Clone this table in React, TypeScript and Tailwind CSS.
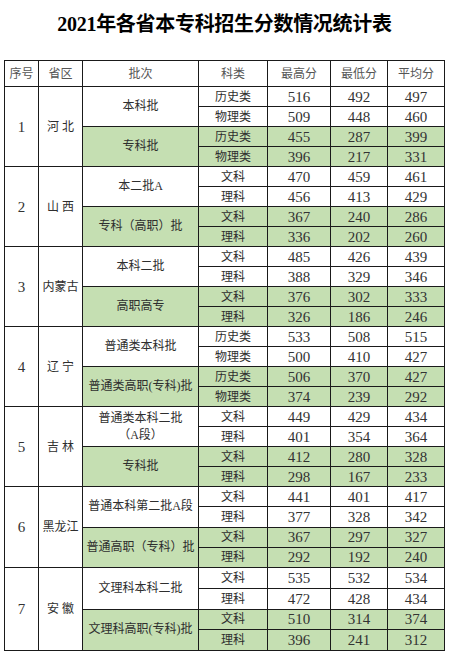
import React from 'react';

type Row = { kind: string; hi: number; lo: number; avg: number };
type Batch = { name: React.ReactNode; rows: Row[] };
type Province = { id: number; name: string; batches: Batch[] };

// 每省两个批次，第二个批次用绿色底
const data: Province[] = [
    {
        id: 1, name: '河 北',
        batches: [
            { name: '本科批', rows: [{ kind: '历史类', hi: 516, lo: 492, avg: 497 }, { kind: '物理类', hi: 509, lo: 448, avg: 460 }] },
            { name: '专科批', rows: [{ kind: '历史类', hi: 455, lo: 287, avg: 399 }, { kind: '物理类', hi: 396, lo: 217, avg: 331 }] },
        ],
    },
    {
        id: 2, name: '山 西',
        batches: [
            { name: '本二批A', rows: [{ kind: '文科', hi: 470, lo: 459, avg: 461 }, { kind: '理科', hi: 456, lo: 413, avg: 429 }] },
            { name: '专科（高职）批', rows: [{ kind: '文科', hi: 367, lo: 240, avg: 286 }, { kind: '理科', hi: 336, lo: 202, avg: 260 }] },
        ],
    },
    {
        id: 3, name: '内蒙古',
        batches: [
            { name: '本科二批', rows: [{ kind: '文科', hi: 485, lo: 426, avg: 439 }, { kind: '理科', hi: 388, lo: 329, avg: 346 }] },
            { name: '高职高专', rows: [{ kind: '文科', hi: 376, lo: 302, avg: 333 }, { kind: '理科', hi: 326, lo: 186, avg: 246 }] },
        ],
    },
    {
        id: 4, name: '辽 宁',
        batches: [
            { name: '普通类本科批', rows: [{ kind: '历史类', hi: 533, lo: 508, avg: 515 }, { kind: '物理类', hi: 500, lo: 410, avg: 427 }] },
            { name: '普通类高职(专科)批', rows: [{ kind: '历史类', hi: 506, lo: 370, avg: 427 }, { kind: '物理类', hi: 374, lo: 239, avg: 292 }] },
        ],
    },
    {
        id: 5, name: '吉 林',
        batches: [
            { name: <>普通类本科二批<br />（A段）</>, rows: [{ kind: '文科', hi: 449, lo: 429, avg: 434 }, { kind: '理科', hi: 401, lo: 354, avg: 364 }] },
            { name: '专科批', rows: [{ kind: '文科', hi: 412, lo: 280, avg: 328 }, { kind: '理科', hi: 298, lo: 167, avg: 233 }] },
        ],
    },
    {
        id: 6, name: '黑龙江',
        batches: [
            { name: '普通本科第二批A段', rows: [{ kind: '文科', hi: 441, lo: 401, avg: 417 }, { kind: '理科', hi: 377, lo: 328, avg: 342 }] },
            { name: '普通高职（专科）批', rows: [{ kind: '文科', hi: 367, lo: 297, avg: 327 }, { kind: '理科', hi: 292, lo: 192, avg: 240 }] },
        ],
    },
    {
        id: 7, name: '安 徽',
        batches: [
            { name: '文理科本科二批', rows: [{ kind: '文科', hi: 535, lo: 532, avg: 534 }, { kind: '理科', hi: 472, lo: 428, avg: 434 }] },
            { name: '文理科高职(专科)批', rows: [{ kind: '文科', hi: 510, lo: 314, avg: 374 }, { kind: '理科', hi: 396, lo: 241, avg: 312 }] },
        ],
    },
];

const cell = 'border border-[#1a1a1a] text-center align-middle p-0 leading-[14px]';
const cjk = 'text-[12px] text-[#2e2e2e]';
const num = 'text-[15px] text-[#333]';

export default function App() {
    return (
        <div
            className="w-[449px] bg-white pt-[10px] px-[4px]"
            style={{ fontFamily: '"Liberation Serif", "Noto Sans CJK SC", serif' }}
        >
            <h1 className="text-[20px] leading-[28px] font-bold text-black text-center tracking-[-0.3px] mb-[22px]">
                2021年各省本专科招生分数情况统计表
            </h1>

            <table className="w-[440px] border-collapse table-fixed leading-[14px]">
                <colgroup>
                    <col className="w-[34px]" />
                    <col className="w-[44px]" />
                    <col className="w-[116px]" />
                    <col className="w-[69px]" />
                    <col className="w-[63px]" />
                    <col className="w-[57px]" />
                    <col className="w-[57px]" />
                </colgroup>
                <thead>
                    <tr className="h-[26px] text-[12px] text-[#555]">
                        <th className={`${cell} font-normal`}>序号</th>
                        <th className={`${cell} font-normal`}>省区</th>
                        <th className={`${cell} font-normal`}>批次</th>
                        <th className={`${cell} font-normal`}>科类</th>
                        <th className={`${cell} font-normal`}>最高分</th>
                        <th className={`${cell} font-normal`}>最低分</th>
                        <th className={`${cell} font-normal`}>平均分</th>
                    </tr>
                </thead>
                <tbody>
                    {data.map((p) =>
                        p.batches.map((b, bi) =>
                            b.rows.map((r, ri) => {
                                const green = bi === 1 ? 'bg-[#c5dfb2]' : 'bg-white';
                                const h = p.id === 7 ? 'h-[20.75px]' : p.id === 6 ? 'h-[20.25px]' : 'h-[20px]';
                                return (
                                    <tr key={`${p.id}-${bi}-${ri}`} className={h}>
                                        {bi === 0 && ri === 0 && (
                                            <>
                                                <td rowSpan={4} className={`${cell} ${num}`}>{p.id}</td>
                                                <td rowSpan={4} className={`${cell} ${cjk}`}>{p.name}</td>
                                            </>
                                        )}
                                        {ri === 0 && (
                                            <td rowSpan={2} className={`${cell} ${cjk} ${green} leading-[17px]`}>{b.name}</td>
                                        )}
                                        <td className={`${cell} ${cjk} ${green}`}>{r.kind}</td>
                                        <td className={`${cell} ${num} ${green}`}>{r.hi}</td>
                                        <td className={`${cell} ${num} ${green}`}>{r.lo}</td>
                                        <td className={`${cell} ${num} ${green}`}>{r.avg}</td>
                                    </tr>
                                );
                            })
                        )
                    )}
                </tbody>
            </table>
        </div>
    );
}
